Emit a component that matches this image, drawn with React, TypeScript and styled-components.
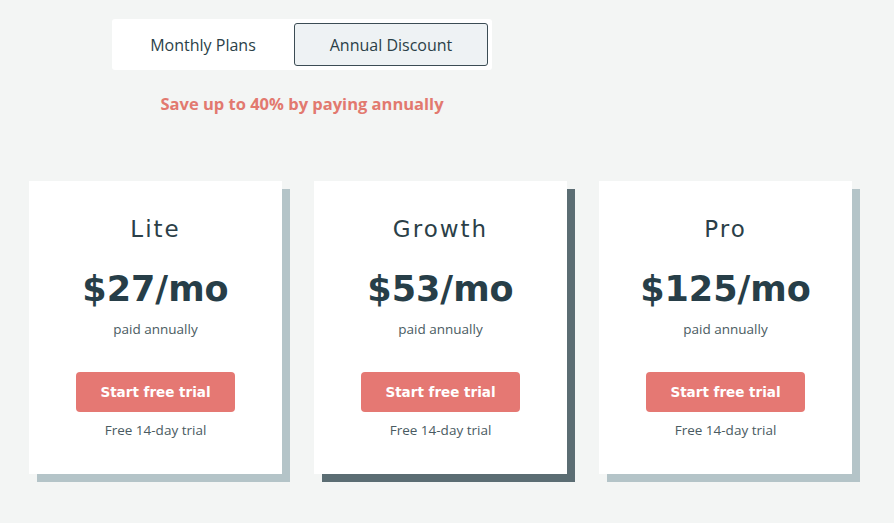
import styled, { createGlobalStyle } from 'styled-components';
import { useState } from 'react';

const GlobalStyle = createGlobalStyle`
	html, body {
		margin: 0;
		padding: 0;
		background: #f3f5f4;
	}
	body {
		font-family: 'Open Sans', 'Noto Sans', sans-serif;
		color: #2b3f48;
	}
`;

interface Plan {
	name: string;
	price: string;
	featured?: boolean;
}

const plans: Plan[] = [
	{ name: 'Lite', price: '$27/mo' },
	{ name: 'Growth', price: '$53/mo', featured: true },
	{ name: 'Pro', price: '$125/mo' },
];

export default function App() {
	const [billing, setBilling] = useState<'monthly' | 'annual'>('annual');

	return (
		<>
			<GlobalStyle />
			<Page>
				<Top>
					<Toggle>
						<ToggleButton
							width={174}
							active={billing === 'monthly'}
							onClick={() => setBilling('monthly')}
						>
							Monthly Plans
						</ToggleButton>
						<ToggleButton
							width={194}
							active={billing === 'annual'}
							onClick={() => setBilling('annual')}
						>
							Annual Discount
						</ToggleButton>
					</Toggle>
					<Savings>Save up to 40% by paying annually</Savings>
				</Top>
				<Cards>
					{plans.map((plan) => (
						<Card key={plan.name} featured={!!plan.featured}>
							<PlanName>{plan.name}</PlanName>
							<Price>{plan.price}</Price>
							<Billed>paid annually</Billed>
							<TrialButton>Start free trial</TrialButton>
							<TrialNote>Free 14-day trial</TrialNote>
						</Card>
					))}
				</Cards>
			</Page>
		</>
	);
}

const Page = styled.main`
	padding: 19px 0 40px 29px;
`;

const Top = styled.section`
	display: inline-flex;
	flex-direction: column;
	align-items: center;
	margin-left: 83px;
`;

const Toggle = styled.div`
	display: flex;
	gap: 4px;
	padding: 4px;
	background: #ffffff;
	border-radius: 3px;
`;

const ToggleButton = styled.button<{ active: boolean; width: number }>`
	width: ${({ width }) => width}px;
	height: 43px;
	border: 1px solid transparent;
	border-radius: 3px;
	background: transparent;
	font-family: 'Open Sans', 'Noto Sans', sans-serif;
	font-size: 16px;
	color: #2b3f48;
	cursor: pointer;
	${({ active }) =>
		active &&
		`
		background: #eef2f4;
		border-color: #3b4c54;
	`}
`;

const Savings = styled.p`
	margin: 22px 0 0;
	font-family: 'Open Sans', 'Noto Sans', sans-serif;
	font-weight: 700;
	font-size: 16.5px;
	color: #e2796f;
`;

const Cards = styled.section`
	display: flex;
	gap: 32px;
	margin-top: 66px;
`;

const Card = styled.article<{ featured: boolean }>`
	width: 253px;
	height: 293px;
	box-sizing: border-box;
	background: #ffffff;
	box-shadow: 8px 8px 0 ${({ featured }) => (featured ? '#5b6d73' : '#b4c4c8')};
	display: flex;
	flex-direction: column;
	align-items: center;
	padding-top: 33px;
`;

const PlanName = styled.h2`
	margin: 0;
	font-family: 'DejaVu Sans', sans-serif;
	font-weight: 400;
	font-size: 23px;
	letter-spacing: 2px;
	line-height: 30px;
	color: #2b3f48;
`;

const Price = styled.div`
	margin-top: 24px;
	font-family: 'DejaVu Sans', sans-serif;
	font-weight: 700;
	font-size: 35px;
	line-height: 42px;
	color: #273e48;
`;

const Billed = styled.div`
	margin-top: 10px;
	font-size: 13.5px;
	line-height: 18px;
	color: #4a5b62;
`;

const TrialButton = styled.button`
	margin-top: 34px;
	width: 159px;
	height: 40px;
	border: 0;
	border-radius: 4px;
	background: #e57873;
	color: #ffffff;
	font-family: 'DejaVu Sans', sans-serif;
	font-weight: 700;
	font-size: 13.5px;
	cursor: pointer;
`;

const TrialNote = styled.div`
	margin-top: 9px;
	font-size: 13.5px;
	line-height: 18px;
	color: #4a5b62;
`;
